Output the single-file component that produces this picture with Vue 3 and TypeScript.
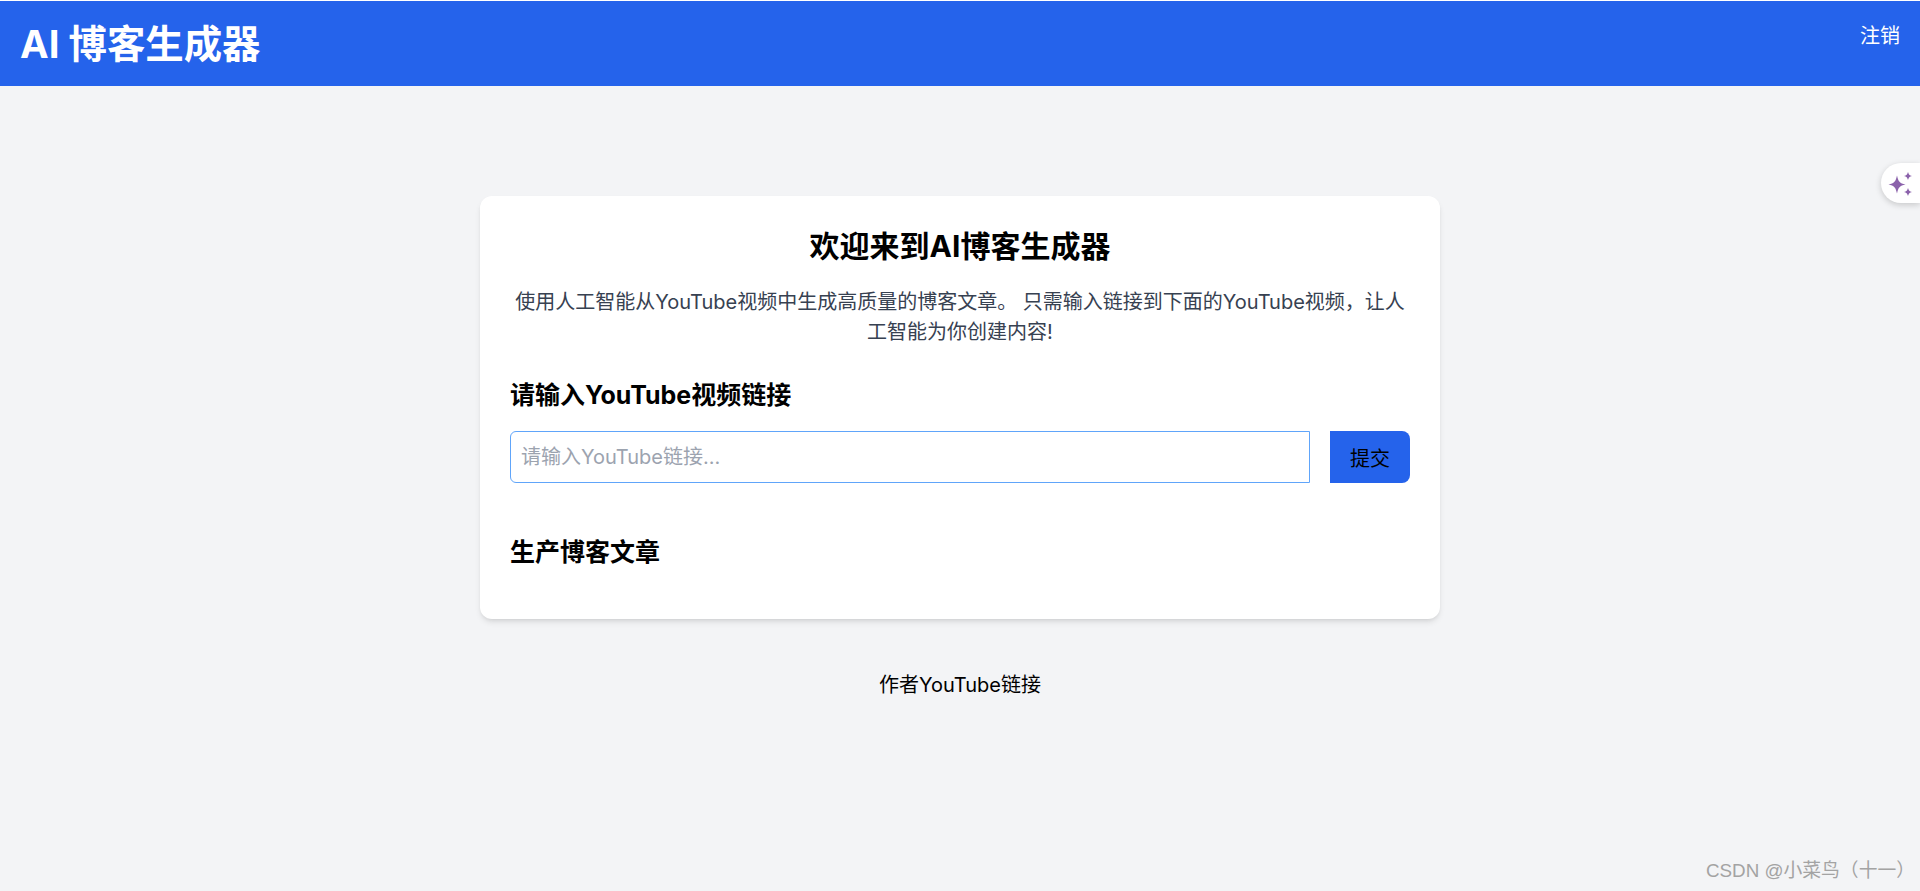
<script setup lang="ts">
const title = "AI 博客生成器";
</script>

<template>
  <div class="page">
    <header class="topbar">
      <h1 class="brand">{{ title }}</h1>
      <a class="logout">注销</a>
    </header>
    <main class="main">
      <section class="card">
        <h2 class="welcome">欢迎来到AI博客生成器</h2>
        <p class="intro">使用人工智能从YouTube视频中生成高质量的博客文章。 只需输入链接到下面的YouTube视频，让人工智能为你创建内容!</p>
        <h3 class="label">请输入YouTube视频链接</h3>
        <div class="form">
          <input class="field" type="text" placeholder="请输入YouTube链接..." />
          <button class="submit" type="button">提交</button>
        </div>
        <h3 class="result">生产博客文章</h3>
      </section>
      <footer class="foot">作者YouTube链接</footer>
    </main>
    <button class="sparkle" type="button" aria-label="AI">
      <svg width="30" height="30" viewBox="0 0 30 30">
        <path fill="#8b62ab" d="M11 7.500 C12.300 13.500 13.700 15.200 19.500 16.500 C13.700 17.800 12.300 19.500 11 25.500 C9.700 19.500 8.300 17.800 2.500 16.500 C8.300 15.200 9.700 13.500 11 7.500Z" />
        <path fill="#8b62ab" d="M22 4 C22.700 6.600 23.400 7.300 26 8 C23.400 8.700 22.700 9.400 22 12 C21.300 9.400 20.600 8.700 18 8 C20.600 7.300 21.300 6.600 22 4Z" />
        <path fill="#8b62ab" d="M22 20 C22.700 22.600 23.400 23.300 26 24 C23.400 24.700 22.700 25.400 22 28 C21.300 25.400 20.600 24.700 18 24 C20.600 23.300 21.300 22.600 22 20Z" />
      </svg>
    </button>
    <div class="watermark">CSDN @小菜鸟（十一）</div>
  </div>
</template>

<style>
html,
body {
  margin: 0;
  background: #f3f4f6;
}
</style>

<style scoped>
.page {
  position: relative;
  height: 891px;
  overflow: hidden;
  box-sizing: border-box;
  padding-top: 1px;
  background: linear-gradient(#fff 1px, #f3f4f6 1px);
  color: #000;
  font-family: Inter, "Noto Sans CJK SC", sans-serif;
}
.topbar {
  display: flex;
  justify-content: space-between;
  align-items: flex-start;
  height: 85px;
  box-sizing: border-box;
  padding: 16px 20px;
  background: #2563eb;
  color: #fff;
}
.brand {
  margin: 0;
  font-size: 38.4px;
  line-height: 54px;
  font-weight: 700;
}
.logout {
  font-size: 20px;
  line-height: 38px;
}
.main {
  display: flex;
  flex-direction: column;
  align-items: center;
  padding-top: 110px;
}
.card {
  width: 960px;
  height: 423px;
  box-sizing: border-box;
  padding: 30px;
  background: #fff;
  border-radius: 12px;
  box-shadow: 0 4px 6px -1px rgba(0, 0, 0, 0.1), 0 2px 4px -2px rgba(0, 0, 0, 0.1);
}
.welcome {
  margin: 0;
  text-align: center;
  font-size: 30px;
  line-height: 40px;
  font-weight: 700;
}
.intro {
  margin: 21px 0 0;
  text-align: center;
  font-size: 20px;
  line-height: 30px;
  color: #374151;
}
.label {
  margin: 32px 0 0;
  font-size: 25px;
  line-height: 32px;
  font-weight: 700;
}
.form {
  display: flex;
  gap: 20px;
  margin-top: 20px;
}
.field {
  flex: 1;
  min-width: 0;
  height: 52px;
  box-sizing: border-box;
  padding: 0 10px;
  border: 1px solid #60a5fa;
  border-radius: 6px 0 0 6px;
  outline: none;
  font: inherit;
  font-size: 20px;
  color: #000;
}
.field::placeholder {
  color: #9ca3af;
}
.submit {
  width: 80px;
  height: 52px;
  padding: 0;
  border: 0;
  border-radius: 0 8px 8px 0;
  background: #2563eb;
  color: #000;
  font: inherit;
  font-size: 20px;
}
.result {
  margin: 53px 0 0;
  font-size: 25px;
  line-height: 32px;
  font-weight: 700;
}
.foot {
  margin-top: 51px;
  font-size: 20px;
  line-height: 30px;
}
.sparkle {
  position: absolute;
  top: 163px;
  right: 0;
  width: 39px;
  height: 40px;
  padding: 0 0 0 5px;
  border: 0;
  border-radius: 20px 0 0 20px;
  background: #fff;
  box-shadow: 0 2px 6px rgba(0, 0, 0, 0.18);
  display: flex;
  align-items: center;
}
.watermark {
  position: absolute;
  right: 5px;
  bottom: 8px;
  font-family: "Liberation Sans", "Noto Sans CJK SC", sans-serif;
  font-size: 18.800px;
  line-height: 24px;
  color: #a3a3a3;
  white-space: nowrap;
}
</style>
